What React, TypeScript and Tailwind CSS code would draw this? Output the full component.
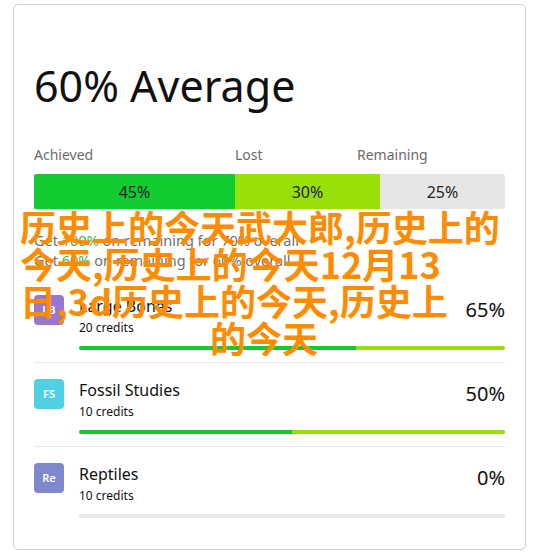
import React from 'react';

type Course = {
  code: string;
  name: string;
  credits: number;
  pct: number;
  color: string;
};

const courses: Course[] = [
  { code: 'LB', name: 'Large Bones', credits: 20, pct: 65, color: 'bg-[#9877cf]' },
  { code: 'FS', name: 'Fossil Studies', credits: 10, pct: 50, color: 'bg-[#4fd1e3]' },
  { code: 'Re', name: 'Reptiles', credits: 10, pct: 0, color: 'bg-[#7f88cc]' },
];

const CourseRow: React.FC<{ course: Course; first: boolean }> = ({ course, first }) => (
  <div className={`flex gap-[15px] pt-4 pb-3 ${first ? '' : 'border-t border-[#e8e8e8]'}`}>
    <div
      className={`${course.color} w-[30px] h-[30px] rounded-[4px] flex items-center justify-center text-white text-[11px] font-semibold shrink-0`}
    >
      {course.code}
    </div>
    <div className="flex-1">
      <div className="flex justify-between">
        <div>
          <div className="text-[16px] leading-[22px] text-[#111]">{course.name}</div>
          <div className="text-[12px] leading-4 mt-[3px] text-[#111]">{course.credits} credits</div>
        </div>
        <div className="text-[20px] leading-[26px] mt-[2px] text-[#111]">{course.pct}%</div>
      </div>
      <div className="mt-[10px] h-1 rounded-full overflow-hidden flex bg-[#e8e8e8]">
        {course.pct > 0 && (
          <>
            <div className="bg-[#12c92f] h-full" style={{ width: `${course.pct}%` }} />
            <div className="bg-[#98df0a] h-full flex-1" />
          </>
        )}
      </div>
    </div>
  </div>
);

export default function App() {
  return (
    <div className="relative w-[538px] h-[554px] bg-white font-['Noto_Sans',sans-serif] overflow-hidden">
      <div className="ml-[13px] mt-1 w-[513px] h-[546px] border border-[#cfcfcf] rounded-[5px] px-5 pt-[55px]">
        <h1 className="text-[43px] leading-[52px] text-[#111] font-normal">60% Average</h1>

        <div className="mt-[33px] flex text-[14px] leading-5 text-[#6b6b6b]">
          <span className="w-[201px]">Achieved</span>
          <span className="w-[122px]">Lost</span>
          <span>Remaining</span>
        </div>

        <div className="mt-[9px] h-[35px] flex rounded-[2px] overflow-hidden text-[16px] text-[#222]">
          <div className="w-[201px] bg-[#12cb31] flex items-center justify-center">45%</div>
          <div className="w-[145px] bg-[#99e00b] flex items-center justify-center">30%</div>
          <div className="flex-1 bg-[#e6e6e6] flex items-center justify-center">25%</div>
        </div>

        <div className="mt-[21px] text-[14.5px] leading-5 text-[#707070]">
          <p>
            Get <span className="text-[#3cb54a]">100%</span> on remaining for 70% overall
          </p>
          <p>
            Get <span className="text-[#3cb54a]">60%</span> on remaining for 60% overall
          </p>
        </div>

        <div className="mt-[9px]">
          {courses.map((c, i) => (
            <CourseRow key={c.code} course={c} first={i === 0} />
          ))}
        </div>
      </div>

      <div className="absolute left-[20px] top-[208px] w-[488px] font-['Noto_Sans_CJK_SC',sans-serif] font-bold text-[36px] leading-[37px] text-[#ff8c00] whitespace-nowrap">
        <div>历史上的今天武大郎,历史上的</div>
        <div>今天,历史上的今天12月13</div>
        <div>日,3d历史上的今天,历史上</div>
        <div className="text-center">的今天</div>
      </div>
    </div>
  );
}
